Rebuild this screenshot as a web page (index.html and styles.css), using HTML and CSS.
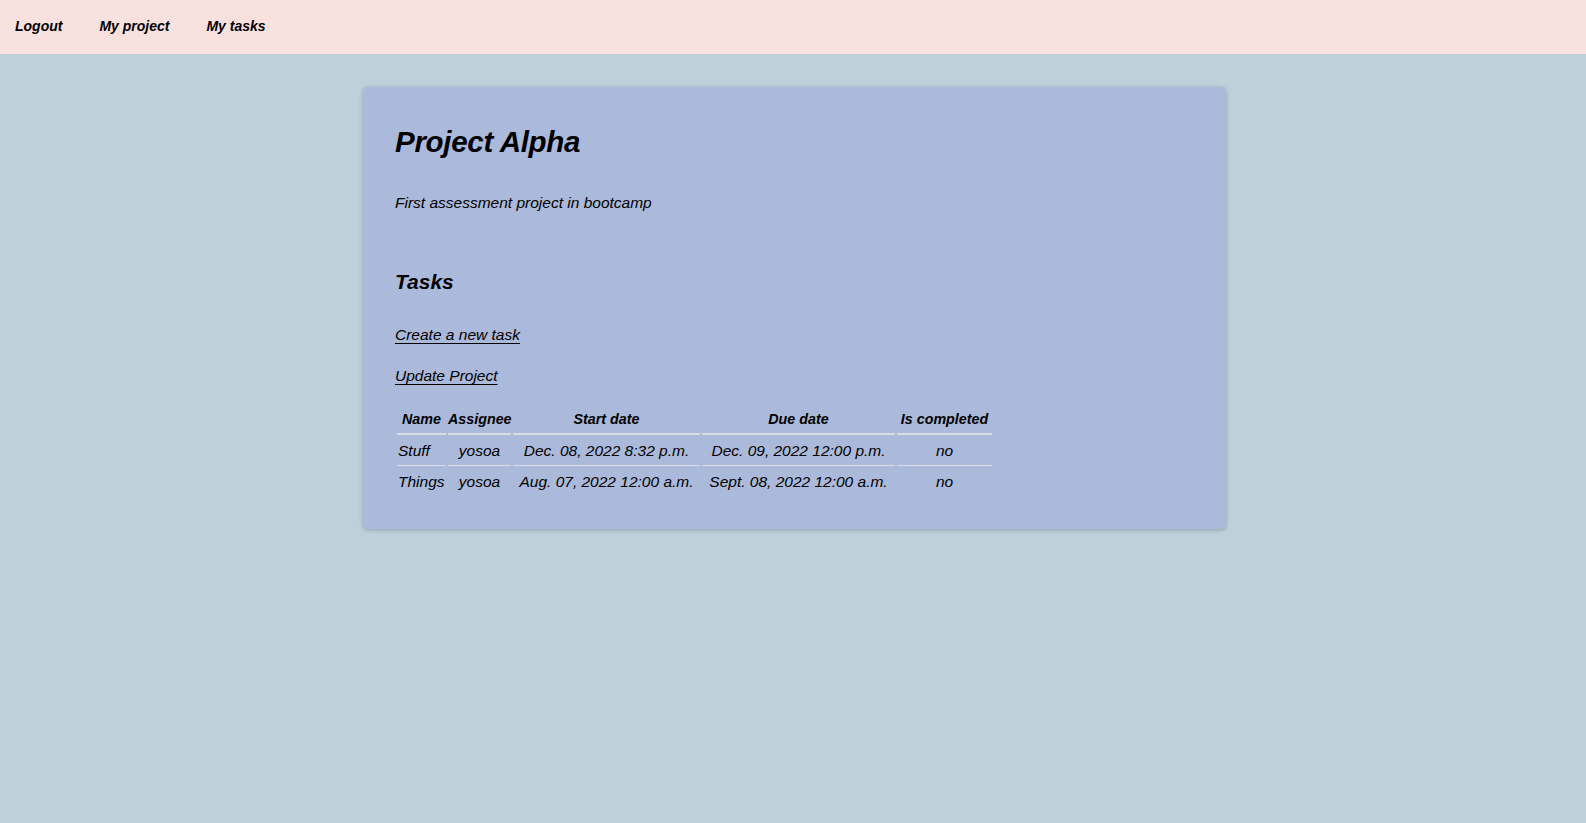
FILE: index.html
```html
<!DOCTYPE html>
<html lang="en">
<head>
<meta charset="utf-8">
<title>Project Alpha</title>
<link rel="stylesheet" href="styles.css">
</head>
<body>
<header class="topbar">
  <nav class="nav">
    <a class="nav-link" href="#">Logout</a>
    <a class="nav-link" href="#">My project</a>
    <a class="nav-link" href="#">My tasks</a>
  </nav>
</header>
<main class="page">
  <section class="card">
    <h1 class="title">Project Alpha</h1>
    <p class="desc">First assessment project in bootcamp</p>
    <h2 class="subtitle">Tasks</h2>
    <p class="action"><a href="#">Create a new task</a></p>
    <p class="action action-second"><a href="#">Update Project</a></p>
    <table class="tasks">
      <thead>
        <tr>
          <th class="c-name">Name</th>
          <th class="c-assignee">Assignee</th>
          <th class="c-start">Start date</th>
          <th class="c-due">Due date</th>
          <th class="c-done">Is completed</th>
        </tr>
      </thead>
      <tbody>
        <tr class="row-first">
          <td class="first">Stuff</td>
          <td>yosoa</td>
          <td>Dec. 08, 2022 8:32 p.m.</td>
          <td>Dec. 09, 2022 12:00 p.m.</td>
          <td>no</td>
        </tr>
        <tr class="row-last">
          <td class="first">Things</td>
          <td>yosoa</td>
          <td>Aug. 07, 2022 12:00 a.m.</td>
          <td>Sept. 08, 2022 12:00 a.m.</td>
          <td>no</td>
        </tr>
      </tbody>
    </table>
  </section>
</main>
</body>
</html>
```
FILE: styles.css
```css
* { box-sizing: border-box; }

body {
  margin: 0;
  min-height: 823px;
  background: #bed0da;
  color: #000;
  font-family: "Liberation Sans", Arial, sans-serif;
  font-style: italic;
  font-size: 15.5px;
}

.topbar {
  background: #f9e1e0;
  height: 54px;
}

.nav {
  display: flex;
  align-items: center;
  gap: 37px;
  height: 54px;
  padding: 0 0 2px 15px;
}

.nav-link {
  color: #000;
  text-decoration: none;
  font-weight: bold;
  font-size: 14px;
  line-height: 20px;
}

.page {
  padding-top: 33px;
}

.card {
  width: 863px;
  margin: 0 auto 0 363px;
  background: #abbadb;
  border-radius: 5px;
  box-shadow: 0 1px 4px rgba(0, 0, 0, 0.22);
  padding: 35px 32px 31px 32px;
}

.title {
  margin: 0;
  font-size: 29.5px;
  line-height: 40px;
  font-weight: bold;
  letter-spacing: -0.3px;
}

.desc {
  margin: 29px 0 0;
  line-height: 24px;
}

.subtitle {
  margin: 52px 0 0;
  font-size: 21px;
  line-height: 30px;
  font-weight: bold;
}

.action {
  margin: 26px 0 0;
  line-height: 24px;
}

.action-second {
  margin-top: 17px;
}

.action a {
  color: #000;
  text-decoration: underline;
  text-underline-offset: 3px;
}

.tasks {
  margin-top: 15px;
  table-layout: fixed;
  width: 599px;
  border-spacing: 2px;
  margin-left: 0;
}

.tasks th,
.tasks td {
  padding: 2px 0;
  line-height: 24px;
  text-align: center;
  white-space: nowrap;
}

.tasks th {
  font-weight: bold;
  font-size: 14.3px;
  border-bottom: 2px solid #dbdcdf;
}

.c-name { width: 49px; }
.c-assignee { width: 63px; }
.c-start { width: 187px; }
.c-due { width: 193px; }
.c-done { width: 95px; }

.tasks td.first {
  text-align: left;
  padding-left: 1px;
}

.row-first td {
  border-bottom: 1px solid #dbdcdf;
}
```
